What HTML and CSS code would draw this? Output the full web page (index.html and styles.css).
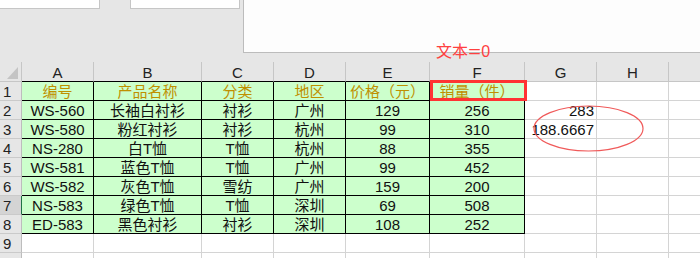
FILE: index.html
```html
<!DOCTYPE html>
<html lang="zh">
<head>
<meta charset="utf-8">
<link rel="stylesheet" href="styles.css">
</head>
<body>
<div class="page">
  <div class="top">
    <div class="box box1"></div>
    <div class="box box2"></div>
    <div class="panel"></div>
  </div>
  <div class="sheet">
    <div class="ch corner"><span class="tri"></span></div>
    <div class="ch k">A</div><div class="ch k">B</div><div class="ch k">C</div><div class="ch k">D</div><div class="ch k">E</div><div class="ch k">F</div><div class="ch">G</div><div class="ch">H</div><div class="ch last"></div>

    <div class="rh">1</div>
    <div class="d h">编号</div><div class="d h">产品名称</div><div class="d h">分类</div><div class="d h">地区</div><div class="d h">价格（元）</div><div class="d h">销量（件）</div><div></div><div></div><div class="last"></div>

    <div class="rh">2</div>
    <div class="d">WS-560</div><div class="d">长袖白衬衫</div><div class="d">衬衫</div><div class="d">广州</div><div class="d">129</div><div class="d">256</div><div class="r">283</div><div></div><div class="last"></div>

    <div class="rh">3</div>
    <div class="d">WS-580</div><div class="d">粉红衬衫</div><div class="d">衬衫</div><div class="d">杭州</div><div class="d">99</div><div class="d">310</div><div class="r">188.6667</div><div></div><div class="last"></div>

    <div class="rh">4</div>
    <div class="d">NS-280</div><div class="d">白T恤</div><div class="d">T恤</div><div class="d">杭州</div><div class="d">88</div><div class="d">355</div><div></div><div></div><div class="last"></div>

    <div class="rh">5</div>
    <div class="d">WS-581</div><div class="d">蓝色T恤</div><div class="d">T恤</div><div class="d">广州</div><div class="d">99</div><div class="d">452</div><div></div><div></div><div class="last"></div>

    <div class="rh">6</div>
    <div class="d">WS-582</div><div class="d">灰色T恤</div><div class="d">雪纺</div><div class="d">广州</div><div class="d">159</div><div class="d">200</div><div></div><div></div><div class="last"></div>

    <div class="rh sel">7</div>
    <div class="d">NS-583</div><div class="d">绿色T恤</div><div class="d">T恤</div><div class="d">深圳</div><div class="d">69</div><div class="d">508</div><div></div><div></div><div class="last"></div>

    <div class="rh">8</div>
    <div class="d">ED-583</div><div class="d">黑色衬衫</div><div class="d">衬衫</div><div class="d">深圳</div><div class="d">108</div><div class="d">252</div><div></div><div></div><div class="last"></div>

    <div class="rh">9</div>
    <div></div><div></div><div></div><div></div><div></div><div></div><div></div><div></div><div class="last"></div>

    <div class="rh"></div>
    <div></div><div></div><div></div><div></div><div></div><div></div><div></div><div></div><div class="last"></div>
  </div>

  <div class="note">文本<span class="eq">=</span>0</div>
  <div class="mark"></div>
  <svg class="ring" width="111" height="47" viewBox="0 0 111 47">
    <ellipse cx="55.5" cy="23.5" rx="54.5" ry="22.5" fill="none" stroke="#f05a5a" stroke-width="1.2"/>
  </svg>
</div>
</body>
</html>
```

FILE: styles.css
```css
html, body {
  margin: 0;
  padding: 0;
}

body {
  background: #e6e6e6;
  font-family: "Liberation Sans", "Noto Sans CJK SC", sans-serif;
  overflow: hidden;
}

.page {
  position: relative;
  width: 700px;
  height: 258px;
  overflow: hidden;
}

/* top toolbar area */
.top {
  display: flex;
  align-items: flex-start;
  height: 62px;
}

.box {
  height: 8px;
  background: #fff;
  border-bottom: 1px solid #c6c6c6;
}

.box1 {
  width: 99px;
  border-right: 1px solid #c6c6c6;
}

.box2 {
  width: 108px;
  margin-left: 30px;
  border-left: 1px solid #c6c6c6;
  border-right: 1px solid #c6c6c6;
}

.panel {
  flex: 1;
  margin-left: 3px;
  height: 52px;
  background: #fdfdfd;
  border-left: 1px solid #bcbcbc;
  border-bottom: 1px solid #bcbcbc;
}

/* spreadsheet grid */
.sheet {
  display: grid;
  grid-template-columns: 22px 72px 108px 72px 72px 84px 95px 72px 72px 31px;
  grid-template-rows: 20px repeat(10, 19px);
}

.sheet > div {
  box-sizing: border-box;
  border-right: 1px solid #d4d4d4;
  border-bottom: 1px solid #d4d4d4;
  background: #fff;
  font-size: 15px;
  line-height: 16px;
  padding-top: 2px;
  text-align: center;
  white-space: nowrap;
  color: #111;
}

.sheet > .last {
  border-right: none;
}

.sheet > .ch {
  background: #e6e6e6;
  border-right-color: #c6c6c6;
  border-bottom-color: #c6c6c6;
  line-height: 17px;
  color: #222;
}

.sheet > .ch.k {
  border-bottom-color: #000;
}

.sheet > .corner {
  display: flex;
  justify-content: flex-end;
  align-items: flex-end;
  padding: 0 3px 2px 0;
}

.tri {
  width: 0;
  height: 0;
  border-left: 11px solid transparent;
  border-bottom: 12px solid #c4c4c4;
}

.sheet > .rh {
  background: #e6e6e6;
  border-right-color: #bdbdbd;
  border-bottom-color: #cacaca;
  text-align: left;
  padding-left: 3px;
  color: #222;
}

.sheet > .rh.sel {
  background: #d4d4d4;
  border-right-color: #217346;
}

.sheet > .d {
  background: #ccffcc;
  border-right-color: #000;
  border-bottom-color: #000;
}

.sheet > .h {
  color: #bf9000;
}

.sheet > .r {
  text-align: right;
  padding-right: 2px;
}

/* annotations */
.note {
  position: absolute;
  left: 436px;
  top: 44px;
  color: #ff4040;
  font-size: 16px;
  line-height: 16px;
  white-space: nowrap;
}

.eq {
  display: inline-block;
  transform: scaleX(1.35);
  margin: 0 2px;
}

.mark {
  position: absolute;
  left: 430px;
  top: 80px;
  width: 97px;
  height: 21px;
  box-sizing: border-box;
  border: 3px solid #ff3333;
}

.ring {
  position: absolute;
  left: 533px;
  top: 105px;
}
```
